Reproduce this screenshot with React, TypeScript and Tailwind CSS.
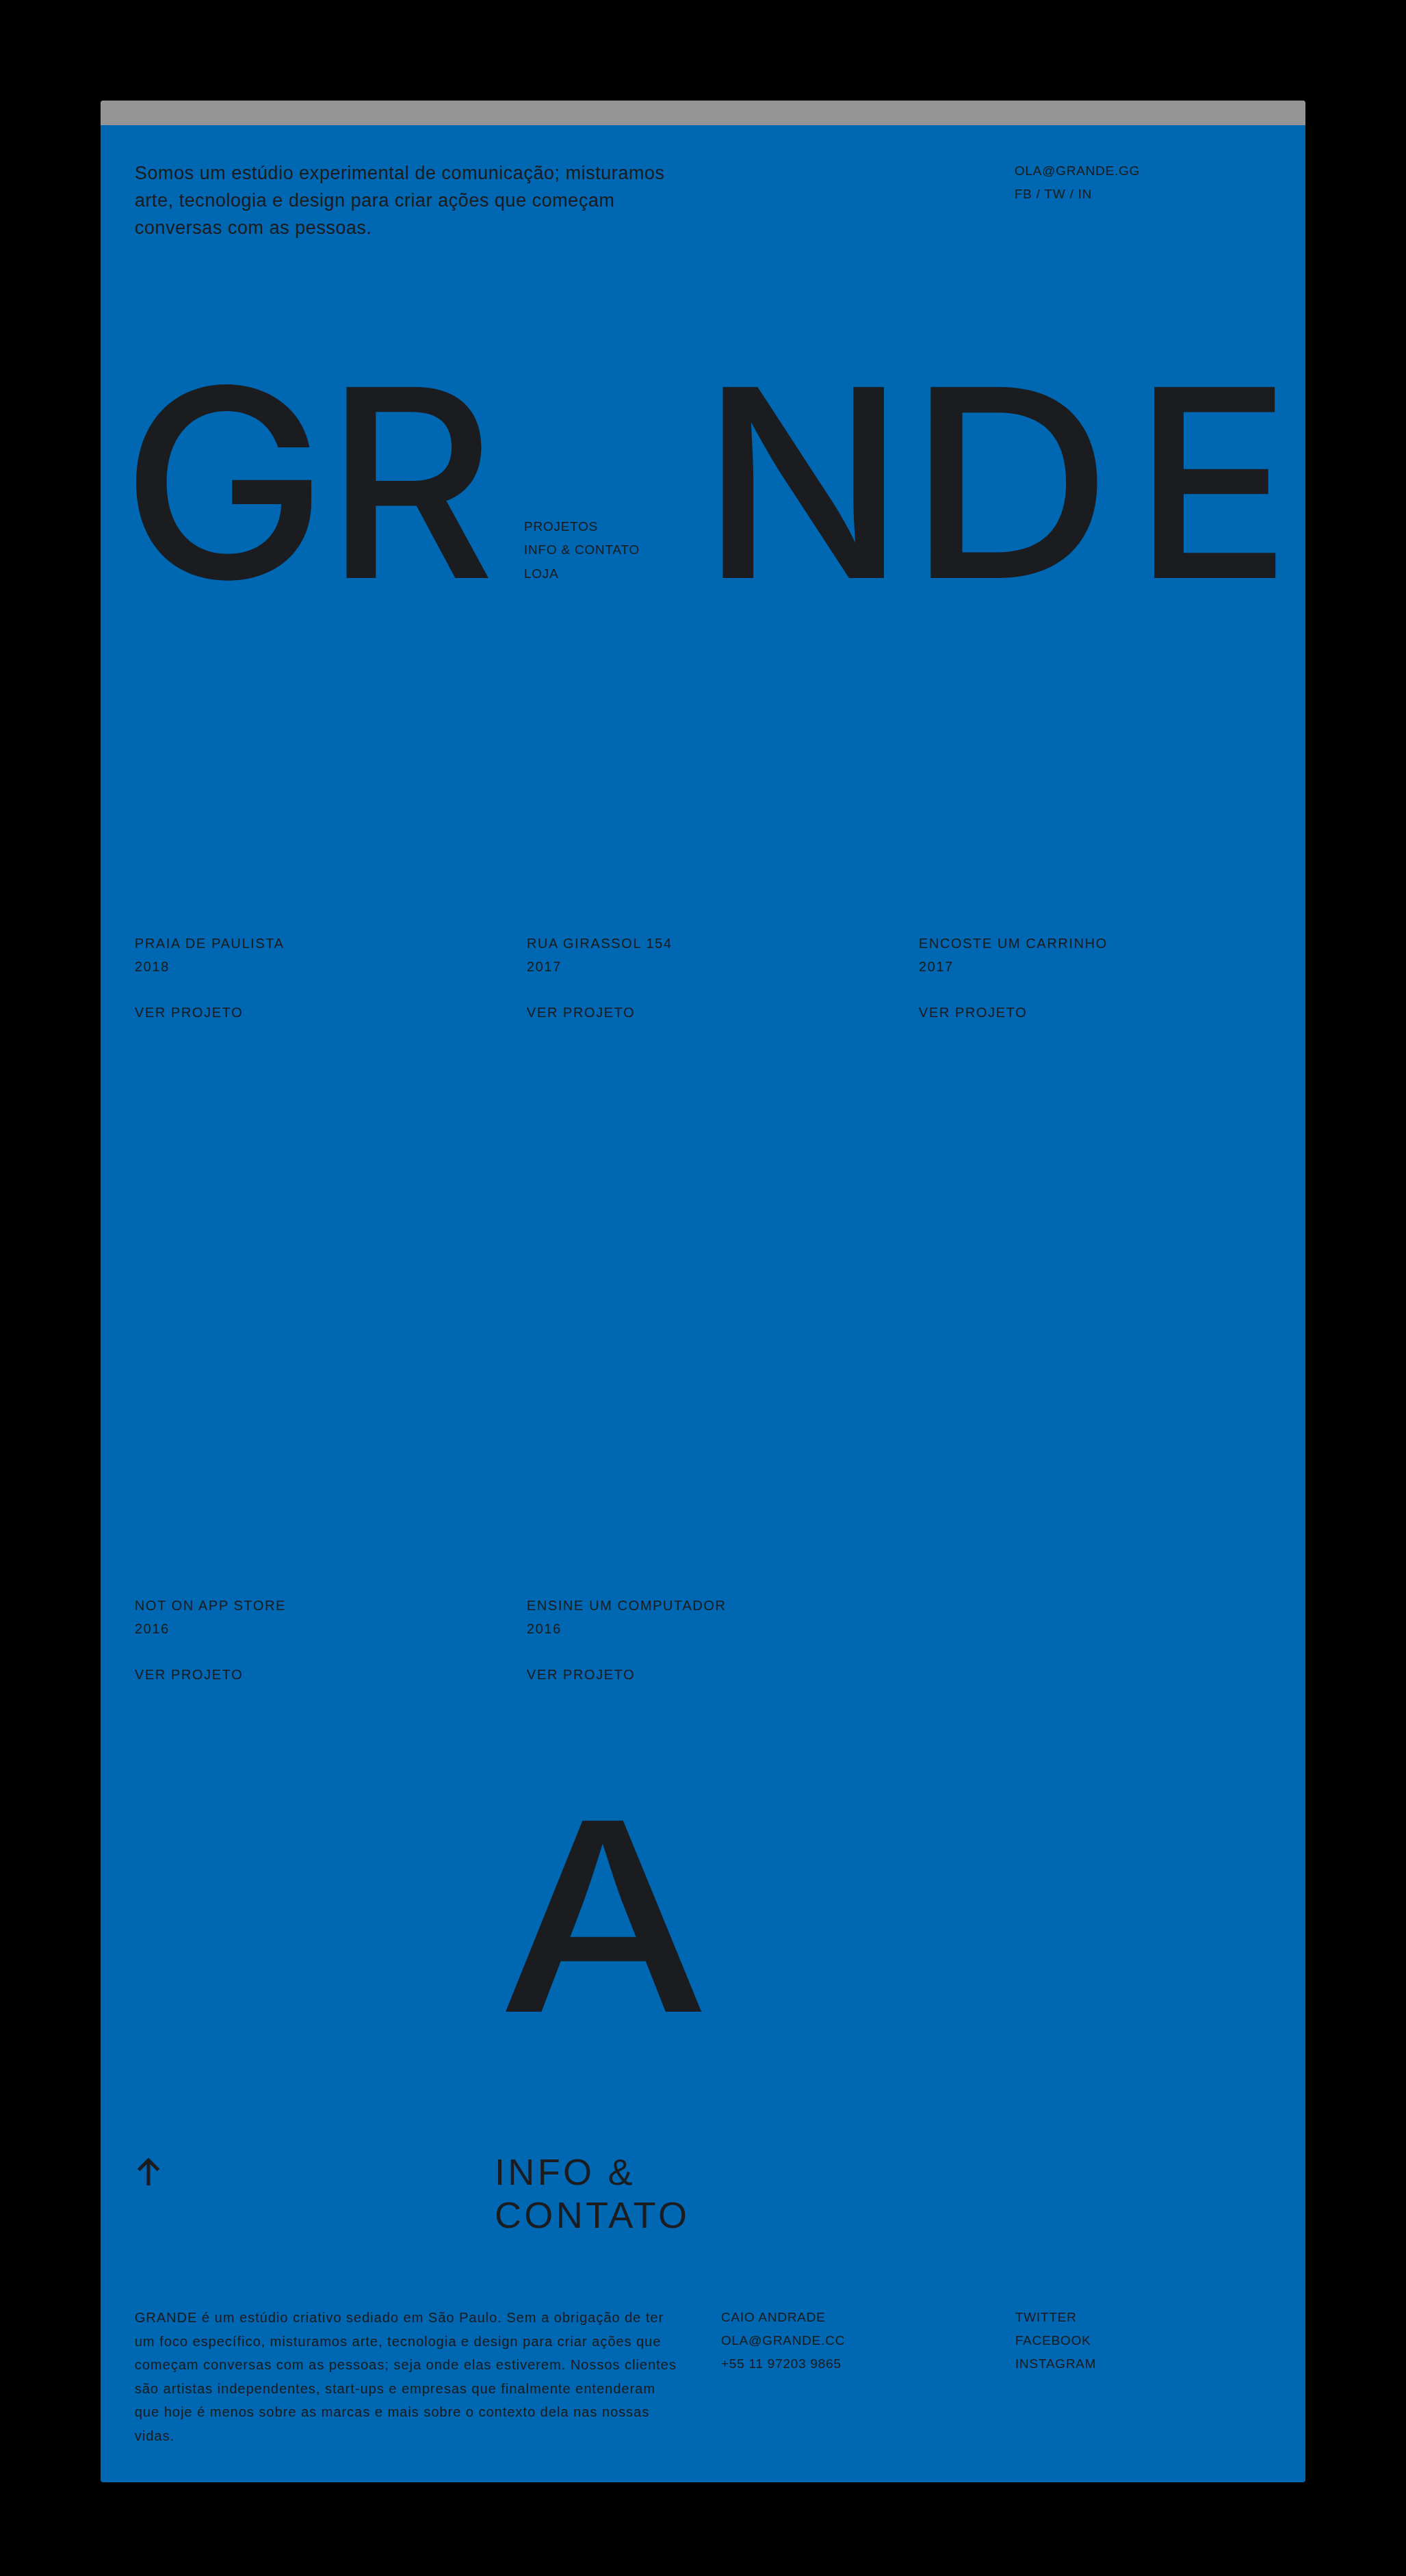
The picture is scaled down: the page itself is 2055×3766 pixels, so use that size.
import React from 'react';

const ink = 'text-[#1b1c20]';

const projects = [
  { name: 'PRAIA DE PAULISTA', year: '2018' },
  { name: 'RUA GIRASSOL 154', year: '2017' },
  { name: 'ENCOSTE UM CARRINHO', year: '2017' },
  { name: 'NOT ON APP STORE', year: '2016' },
  { name: 'ENSINE UM COMPUTADOR', year: '2016' },
];

const ArrowUp = () => (
  <svg width="34" height="41" viewBox="0 0 34 41" fill="none" className="block">
    <path d="M17 4 V41" stroke="#1b1c20" strokeWidth="5" />
    <path d="M2.5 18.5 L17 4 L31.5 18.5" stroke="#1b1c20" strokeWidth="5" />
  </svg>
);

// one big letter, centred in its own slot
const Big = ({ ch, w, sx = '' }: { ch: string; w: string; sx?: string }) => (
  <div className={`flex shrink-0 justify-center ${w}`}>
    <span className={sx}>{ch}</span>
  </div>
);

const App = () => {
  return (
    <div className="min-h-screen bg-black px-[147px] pt-[147px] pb-[141px] font-['Liberation_Sans',Arial,sans-serif]">
      <div className={`overflow-hidden rounded-[4px] bg-[#0067b3] ${ink}`}>
        <div className="h-[36px] bg-[#959595]"></div>

        <div className="px-[50px] pt-[50px] pb-[51px]">
          {/* header */}
          <div className="flex">
            <p className="w-[1286px] text-[27px] leading-[40px] tracking-[0.02em]">
              Somos um estúdio experimental de comunicação; misturamos
              <br />
              arte, tecnologia e design para criar ações que começam
              <br />
              conversas com as pessoas.
            </p>
            <div className="text-[19px] leading-[34px] tracking-[0.04em]">
              <p>OLA@GRANDE.GG</p>
              <p>FB / TW / IN</p>
            </div>
          </div>

          {/* big word, the A has fallen out */}
          <div className="mt-[161px] flex h-[390px] items-start font-['Inter',sans-serif] text-[384px] leading-none font-medium">
            <Big ch="G" w="w-[262px]" sx="scale-x-[1.05]" />
            <Big ch="R" w="w-[282px]" />
            <nav className="mb-[48px] w-[311px] shrink-0 self-end pl-[25px] font-['Liberation_Sans',Arial,sans-serif] text-[19px] leading-[34.5px] font-normal tracking-[0.04em]">
              <p>PROJETOS</p>
              <p>INFO &amp; CONTATO</p>
              <p>LOJA</p>
            </nav>
            <Big ch="N" w="w-[245px]" sx="scale-x-[1.03]" />
            <Big ch="D" w="w-[360px]" sx="scale-x-[1.08]" />
            <Big ch="E" w="w-[230px]" />
          </div>

          {/* projects */}
          <div className="mt-[459px] grid grid-cols-3 gap-x-[58px] gap-y-[834px] text-[20px] leading-[33.5px] tracking-[0.08em]">
            {projects.map((p, i) => (
              <div key={i}>
                <p>{p.name}</p>
                <p>{p.year}</p>
                <p className="mt-[33.5px]">VER PROJETO</p>
              </div>
            ))}
          </div>

          {/* fallen A */}
          <div className="mt-[145px] ml-[541px] flex h-[390px] w-[288px] justify-center font-['Inter',sans-serif] text-[384px] leading-none font-medium">
            <span className="scale-x-[1.13]">A</span>
          </div>

          {/* info heading */}
          <div className="mt-[144px] flex">
            <div className="w-[526px] shrink-0 pt-[10px] pl-[3px]">
              <ArrowUp />
            </div>
            <h2 className="text-[54px] leading-[63px] tracking-[0.08em]">
              INFO &amp;
              <br />
              CONTATO
            </h2>
          </div>

          {/* footer */}
          <div className="mt-[101px] flex">
            <p className="w-[857px] shrink-0 text-[20px] leading-[34.5px] tracking-[0.05em]">
              GRANDE é um estúdio criativo sediado em São Paulo. Sem a obrigação de ter
              <br />
              um foco específico, misturamos arte, tecnologia e design para criar ações que
              <br />
              começam conversas com as pessoas; seja onde elas estiverem. Nossos clientes
              <br />
              são artistas independentes, start-ups e empresas que finalmente entenderam
              <br />
              que hoje é menos sobre as marcas e mais sobre o contexto dela nas nossas
              <br />
              vidas.
            </p>
            <div className="w-[430px] shrink-0 text-[19px] leading-[34px] tracking-[0.04em]">
              <p>CAIO ANDRADE</p>
              <p>OLA@GRANDE.CC</p>
              <p>+55 11 97203 9865</p>
            </div>
            <div className="text-[19px] leading-[34px] tracking-[0.04em]">
              <p>TWITTER</p>
              <p>FACEBOOK</p>
              <p>INSTAGRAM</p>
            </div>
          </div>
        </div>
      </div>
    </div>
  );
};

export default App;
